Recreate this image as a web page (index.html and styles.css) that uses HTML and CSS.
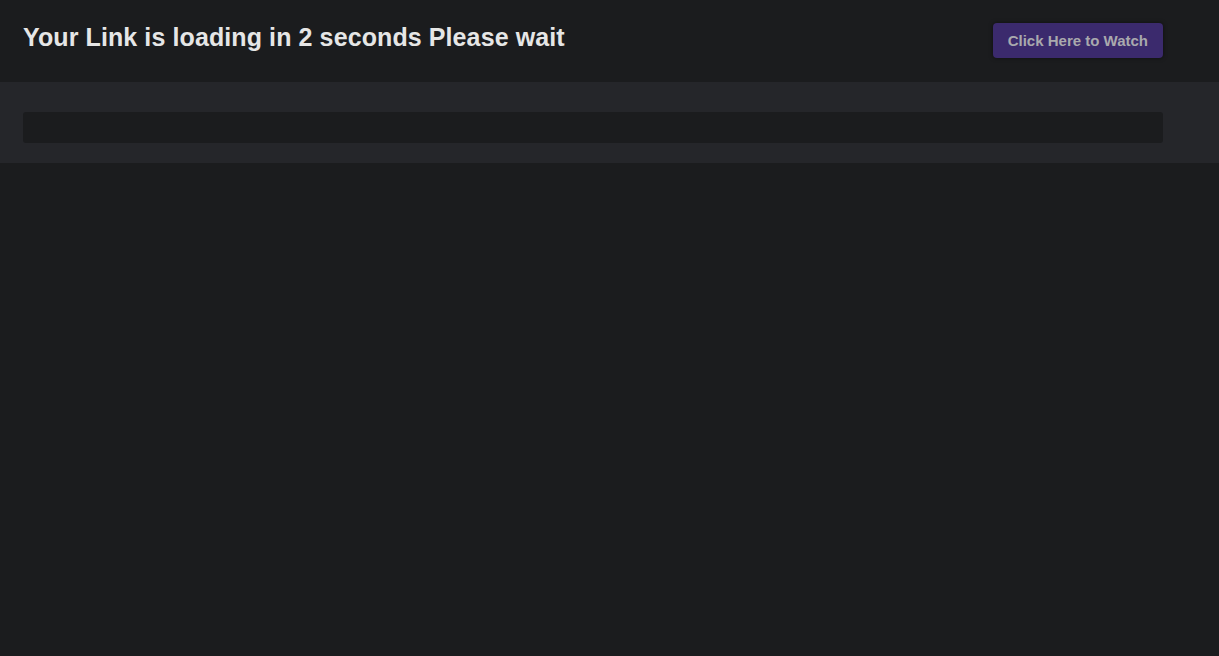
FILE: index.html
```html
<!DOCTYPE html>
<html lang="en">
<head>
<meta charset="UTF-8">
<meta name="viewport" content="width=device-width, initial-scale=1.0">
<title>Your Link is loading</title>
<link rel="stylesheet" href="styles.css">
</head>
<body>

<div class="topbar">
    <div class="wrap">
        <h1 class="title">Your Link is loading in <span id="count">2</span> seconds Please wait</h1>
        <a class="watch-btn" href="#">Click Here to Watch</a>
    </div>
</div>

<div class="band">
    <div class="wrap">
        <div class="progress"></div>
    </div>
</div>

</body>
</html>
```

FILE: styles.css
```css
body {
    font-family: "Liberation Sans", Arial, sans-serif;
    background-color: #1b1c1e;
    margin: 0;
    padding: 0;
}
.wrap {
    width: 1140px;
    margin-left: 23px;
}
.topbar {
    height: 82px;
    background-color: #1b1c1e;
}
.topbar .wrap {
    display: flex;
    justify-content: space-between;
    align-items: flex-start;
}
.title {
    margin: 23px 0 0 0;
    font-size: 25px;
    font-weight: bold;
    color: #e6e6e6;
    letter-spacing: 0.1px;
}
.watch-btn {
    margin-top: 23px;
    display: block;
    height: 35px;
    line-height: 35px;
    padding: 0 15px;
    background-color: #3b2a6d;
    color: #a9a9ad;
    font-size: 15px;
    font-weight: bold;
    text-decoration: none;
    border-radius: 4px;
    box-shadow: 0 0 4px rgba(0,0,0,0.5);
}
.band {
    background-color: #25262a;
    height: 81px;
    padding-top: 30px;
    box-sizing: border-box;
}
.progress {
    height: 31px;
    background-color: #1b1c1e;
    border-radius: 3px;
}
```
